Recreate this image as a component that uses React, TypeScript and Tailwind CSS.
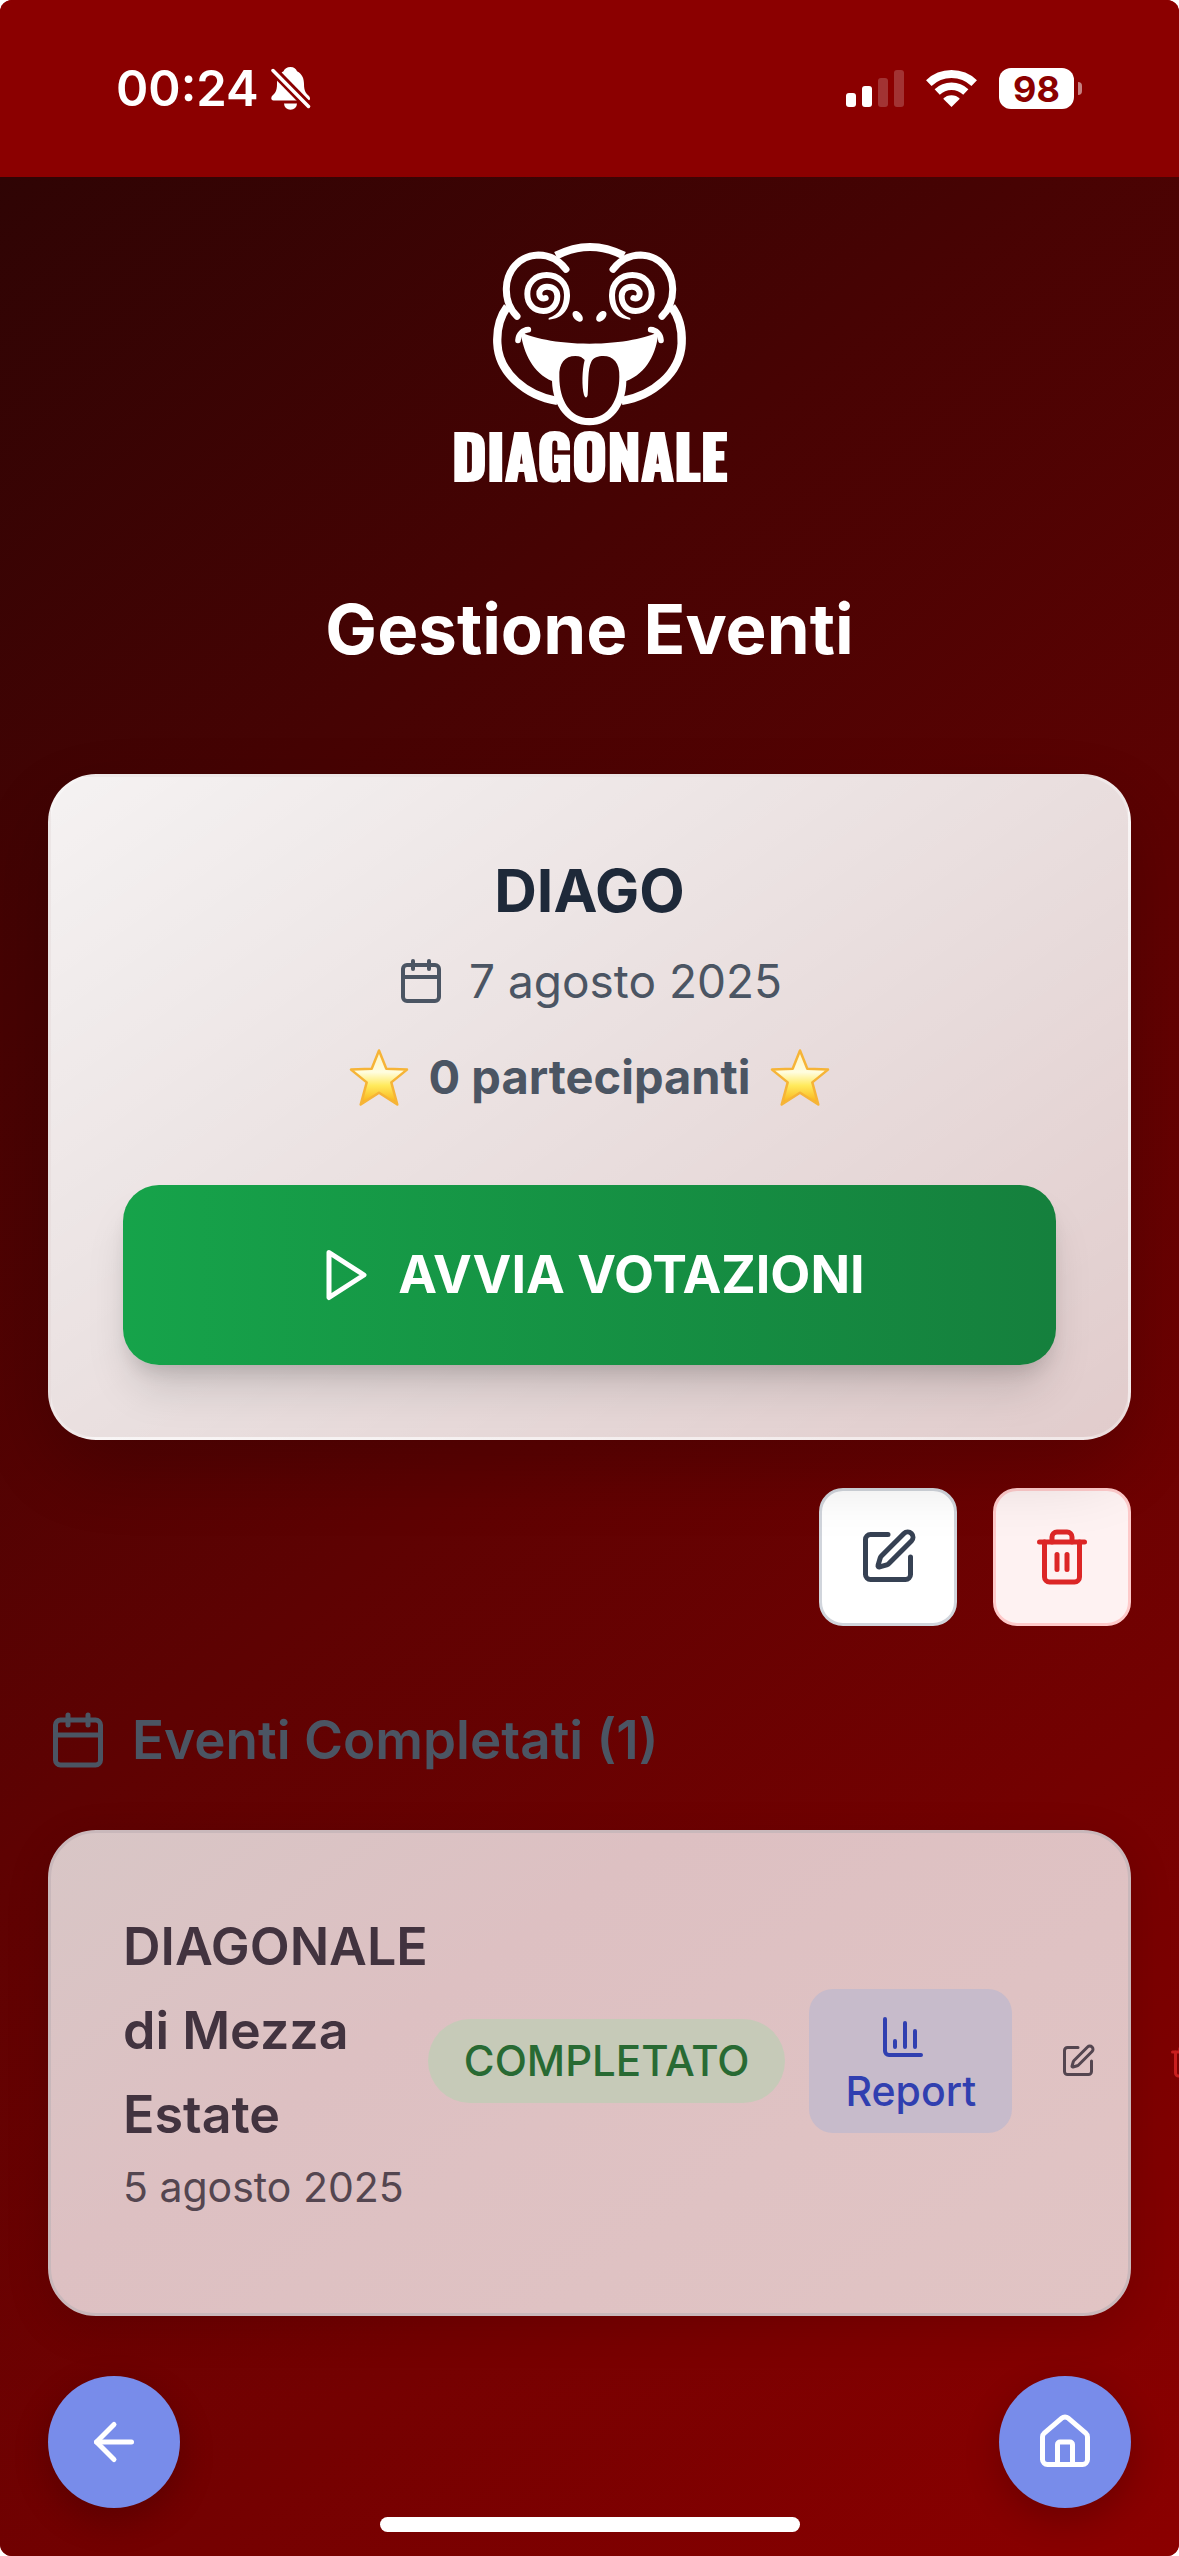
import React from "react";
import {
  ArrowLeft,
  Calendar,
  ChartColumn,
  House,
  SquarePen,
  Trash2,
} from "lucide-react";

function BellOff() {
  return (
    <svg viewBox="0 0 40 44" className="h-11 w-10" aria-hidden="true">
      <mask id="bell-cut">
        <rect width="40" height="44" fill="white" />
        <path d="M-2 -1 L42 44" stroke="black" strokeWidth="9" />
      </mask>
      <g fill="white" mask="url(#bell-cut)">
        <path d="M19.5 0C23 0 25 2 26 4.2C31 7 33 11 33 17C33 24 35 26.5 38 29C39.500 30.500 39.500 33.500 37 33.500H2.500C-.3 33.500 0 30.500 1 29C4 26.500 6 24 6 17C6 11 8 6.500 12.500 4.200C13.500 2 16 0 19.500 0Z" />
      </g>
      <path d="M13 36.500H26A6.500 6.200 0 0 1 13 36.500Z" fill="white" />
      <path d="M2 3.500L37.500 39.500" stroke="white" strokeWidth="3.500" strokeLinecap="round" />
    </svg>
  );
}

function Signal() {
  return (
    <svg viewBox="0 0 58 37" className="h-[37px] w-[58px]" fill="white" aria-hidden="true">
      <rect x="0" y="23" width="10" height="14" rx="3" />
      <rect x="16" y="16" width="10" height="21" rx="3" />
      <rect x="32" y="8" width="10" height="29" rx="3" opacity=".2" />
      <rect x="48" y="0" width="10" height="37" rx="3" opacity=".2" />
    </svg>
  );
}

function Wifi() {
  return (
    <svg viewBox="0 0 51 37" className="h-[37px] w-[51px]" fill="none" stroke="white" aria-hidden="true">
      <path d="M2.800 13.100A33 33 0 0 1 48.200 13.100" strokeWidth="8" />
      <path d="M11.200 22A20.750 20.750 0 0 1 39.800 22" strokeWidth="7.500" />
      <path d="M25.500 37L17.200 28.700A12 12 0 0 1 33.800 28.700Z" fill="white" stroke="none" />
    </svg>
  );
}

function FrogHalf() {
  return (
    <g fill="none" stroke="white" strokeLinecap="round">
      <path d="M408 148C385 118 355 105 325 105C265 107 230 155 229 205C228 240 240 268 261 289" strokeWidth="21" />
      <path d="M232 260C207 293 200 330 202 370C206 460 290 528 382 543" strokeWidth="25" strokeLinecap="butt" />
      <path
        d="M411 225C411 190 385 165 350 165C315 165 292 190 292 222C292 252 312 273 340 273C365 273 382 255 382 228C382 210 368 199 350 200C335 201 327 212 328 222C329 233 337 238 347 234"
        strokeWidth="18"
      />
      <path d="M356 299C400 296 420 265 420 225L402 225C402 258 388 284 356 294Z" fill="white" stroke="none" />
      <ellipse cx="443" cy="289" rx="19" ry="12" transform="rotate(48 443 289)" fill="white" stroke="none" />
      <path d="M295 329C279 330 265 342 264 361" strokeWidth="17" />
    </g>
  );
}

function Logo() {
  return (
    <div className="flex flex-col items-center">
      <svg viewBox="180 60 600 561" className="h-[187px] w-[200px]" role="img" aria-label="Rana Diagonale">
        <path d="M378 107C445 72.500 515 72.500 582 107" stroke="white" strokeWidth="24" fill="none" />
        <FrogHalf />
        <g transform="translate(957 0) scale(-1 1)">
          <FrogHalf />
        </g>
        <path
          fill="white"
          fillRule="evenodd"
          d="M272 336C300 352 380 371 478 371C577 371 655 352 685 336C680 400 650 460 589 483C588 560 545 616 478 616C412 616 368 560 366 483C310 460 280 400 272 336ZM388 470C386 430 405 408 436 408C450 408 458 413 464 420C456 450 455 500 462 525C465 535 471 535 473 525C476 490 472 450 484 425C490 413 505 408 520 408C550 408 570 430 568 470C568 540 535 594 478 594C420 594 388 540 388 470Z"
        />
      </svg>
      <span className="font-['Oswald','Roboto_Condensed','Liberation_Sans_Narrow','Open_Sans_Condensed','DejaVu_Sans_Condensed',sans-serif] text-[60px] leading-[54px] font-black text-white [-webkit-text-stroke:2px_white]">
        DIAGONALE
      </span>
    </div>
  );
}

function Star({ id }: { id: string }) {
  return (
    <svg viewBox="0 0 60 60" className="size-[60px]" aria-hidden="true">
      <defs>
        <linearGradient id={id} x1="0" y1="0" x2="0" y2="1">
          <stop offset="0" stopColor="#fff6c0" />
          <stop offset=".4" stopColor="#fffde0" />
          <stop offset=".65" stopColor="#ffea5c" />
          <stop offset="1" stopColor="#f9ac12" />
        </linearGradient>
      </defs>
      <path
        d="M30 3.500L37.300 21.800L58 22.600L42.300 35.400L48.300 57.500L30 45.700L11.700 57.500L17.700 35.400L2 22.600L22.700 21.800Z"
        fill={`url(#${id})`}
        stroke="#f6b437"
        strokeWidth="2.500"
        strokeLinejoin="round"
      />
    </svg>
  );
}

function StatusBar() {
  return (
    <header className="flex h-[177px] items-center justify-between bg-[#8b0000] pr-[97px] pl-[116px] text-white">
      <div className="flex items-center gap-3">
        <time className="text-[49px] leading-none font-semibold">00:24</time>
        <BellOff />
      </div>
      <div className="flex items-center gap-[22px]">
        <Signal />
        <Wifi />
        <div className="flex items-center gap-1">
          <span className="flex h-[41px] w-[75px] items-center justify-center rounded-xl bg-white text-4xl leading-none font-bold text-[#8b0000]">
            98
          </span>
          <span className="h-[13px] w-1 rounded-r-full bg-white/50" />
        </div>
      </div>
    </header>
  );
}

function CurrentEvent() {
  return (
    <section className="relative z-10 flex flex-col items-center rounded-[48px] border-3 border-white/30 bg-[linear-gradient(145deg,rgba(255,255,255,0.95),rgba(255,255,255,0.8))] p-[72px] shadow-[0_30px_75px_-6px_rgba(0,0,0,0.2)]">
      <h2 className="text-[59px] leading-[84px] font-bold text-gray-800">DIAGO</h2>
      <p className="mt-3 flex items-center gap-6 text-[46px] leading-[72px] text-[#4b5563]">
        <Calendar className="size-12" />
        7 agosto 2025
      </p>
      <p className="mt-6 flex items-center gap-5 text-[47px] leading-[72px] font-bold text-[#4b5563]">
        <Star id="star-left" />
        0 partecipanti
        <Star id="star-right" />
      </p>
      <button
        type="button"
        className="mt-[72px] flex h-[180px] w-full items-center justify-center gap-6 rounded-[36px] bg-[linear-gradient(90deg,#16a34a,#15803d)] text-[52px] leading-[84px] font-bold text-white shadow-[0_30px_45px_-9px_rgba(0,0,0,0.15),0_12px_18px_-6px_rgba(0,0,0,0.12)]"
      >
        <svg viewBox="0 0 24 24" className="size-[60px]" fill="none" stroke="currentColor" strokeWidth="2" strokeLinejoin="round" aria-hidden="true">
          <polygon points="6 3 20 12 6 21" />
        </svg>
        AVVIA VOTAZIONI
      </button>
    </section>
  );
}

function CompletedEvent() {
  return (
    <article className="rounded-[48px] border-3 border-[#c9b8bb] bg-[linear-gradient(145deg,#d8c6c6,#ddc0c2_35%,#e1c4c4)] px-[72px] pt-[72px] pb-24 shadow-[0_12px_45px_rgba(0,0,0,0.12)]">
      <div className="flex items-center">
        <div className="flex-1">
          <h3 className="text-[52px] leading-[84px] font-semibold text-[#42333f]">DIAGONALE di Mezza Estate</h3>
          <p className="text-[41px] leading-[60px] whitespace-nowrap text-[#544650]">5 agosto 2025</p>
        </div>
        <div className="flex shrink-0 items-center gap-6">
          <span className="rounded-full bg-[#c6cab8] px-9 py-3 text-[42px] leading-[60px] font-medium text-[#286a33]">
            COMPLETATO
          </span>
          <button
            type="button"
            className="flex flex-col items-center rounded-3xl bg-[#c7bbcb] px-9 pt-6 pb-3 text-[41px] leading-[60px] font-medium text-[#303fb0]"
          >
            <ChartColumn className="mr-4 size-12" />
            Report
          </button>
          <button type="button" aria-label="Modifica" className="p-6 text-[#544650]">
            <SquarePen className="size-9" />
          </button>
          <button type="button" aria-label="Elimina" className="p-6 text-[#c81e1e]">
            <Trash2 className="size-9" />
          </button>
        </div>
      </div>
    </article>
  );
}

export default function App() {
  return (
    <div className="min-h-screen bg-white font-['Inter','Liberation_Sans',sans-serif]">
      <div className="flex min-h-screen flex-col overflow-hidden rounded-xl bg-[#8b0000]">
        <StatusBar />
        <div className="flex flex-1 flex-col bg-[linear-gradient(140deg,#2f0404,#5e0202_50%,#8b0000)] px-12 pt-[63px] pb-6">
          <main>
            <Logo />
            <h1 className="mt-[104px] mb-[101px] text-center text-[69px] leading-[88px] font-bold text-white">
              Gestione Eventi
            </h1>
            <CurrentEvent />
            <div className="mt-12 flex justify-end gap-9">
              <button
                type="button"
                aria-label="Modifica evento"
                className="flex size-[138px] items-center justify-center rounded-3xl border-3 border-gray-300 bg-white text-gray-700"
              >
                <SquarePen className="size-[60px]" />
              </button>
              <button
                type="button"
                aria-label="Elimina evento"
                className="flex size-[138px] items-center justify-center rounded-3xl border-3 border-[#fecaca] bg-[#fef2f2] text-[#dc2626]"
              >
                <Trash2 className="size-[60px]" />
              </button>
            </div>
            <h2 className="mt-[72px] mb-12 flex items-center gap-6 text-[53px] leading-[84px] font-semibold text-[#4b5563]">
              <Calendar className="size-[60px]" />
              Eventi Completati (1)
            </h2>
            <CompletedEvent />
          </main>
          <nav className="mt-[60px] flex justify-between text-white">
            <a
              href="#indietro"
              aria-label="Indietro"
              className="flex size-[132px] items-center justify-center rounded-full bg-[#788cea] shadow-[0_12px_36px_rgba(0,0,0,0.2)]"
            >
              <ArrowLeft className="size-[60px]" />
            </a>
            <a
              href="#home"
              aria-label="Home"
              className="flex size-[132px] items-center justify-center rounded-full bg-[#788cea] shadow-[0_12px_36px_rgba(0,0,0,0.2)]"
            >
              <House className="size-[60px]" />
            </a>
          </nav>
          <div className="mt-[9px] h-[15px] w-[420px] self-center rounded-full bg-white" />
        </div>
      </div>
    </div>
  );
}
